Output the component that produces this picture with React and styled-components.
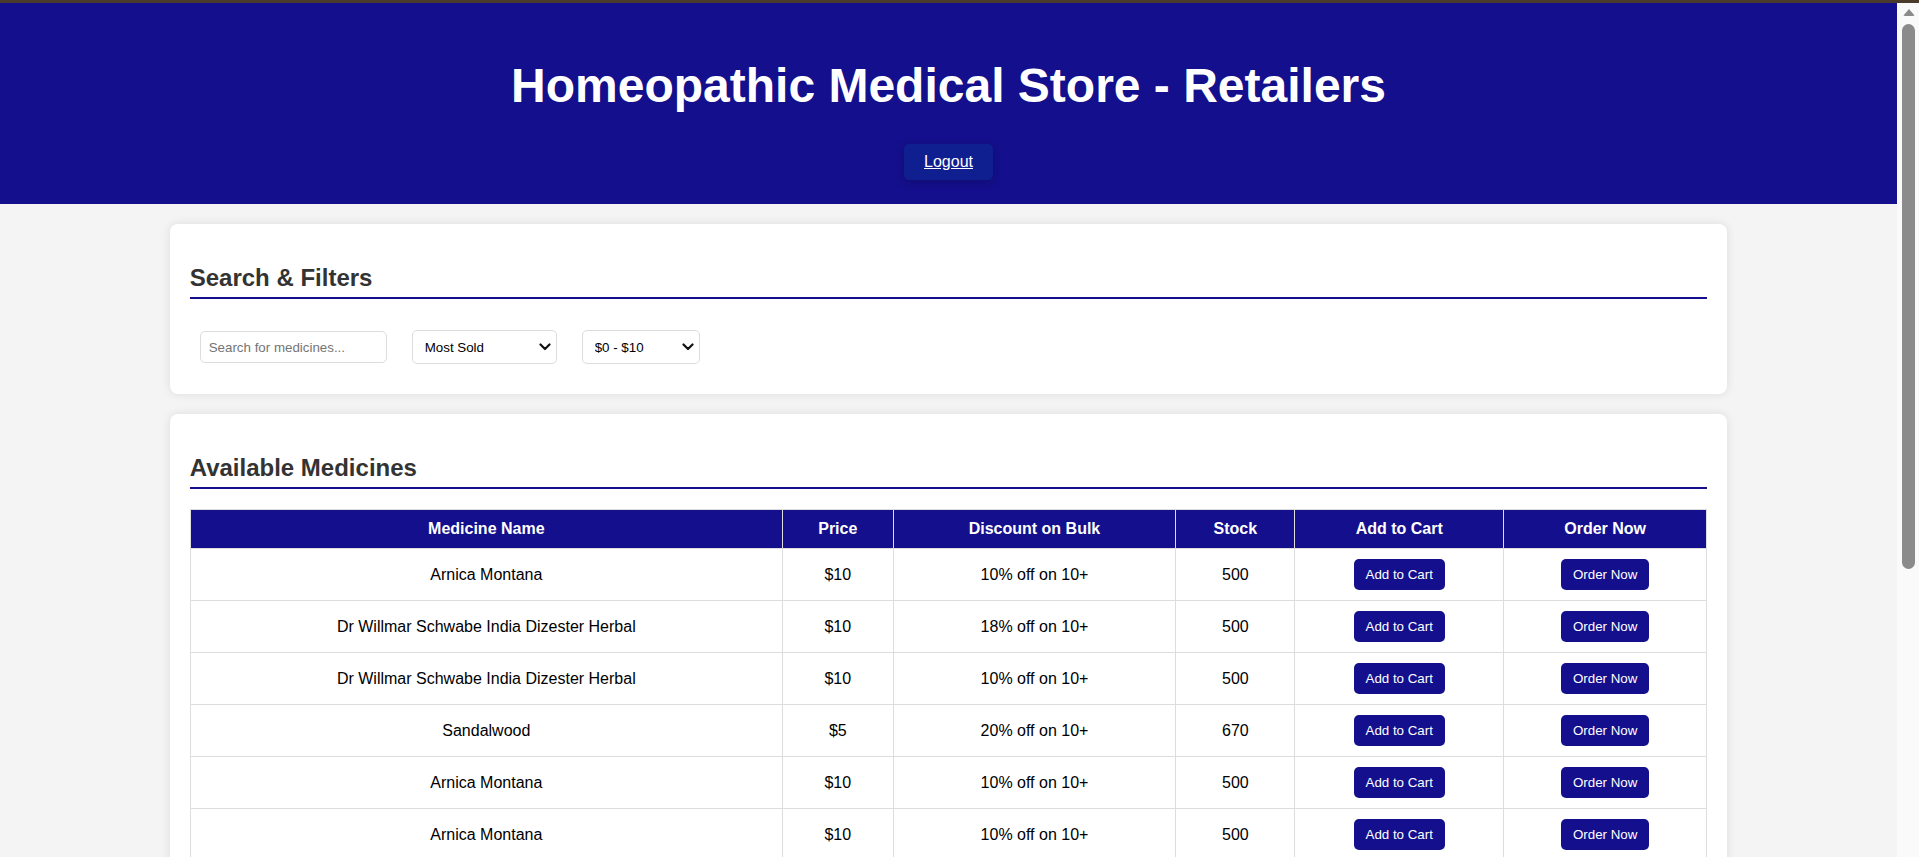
import React from 'react';
import styled, { createGlobalStyle } from 'styled-components';

const GlobalStyle = createGlobalStyle`
  html, body {
    margin: 0;
    padding: 0;
    height: 100%;
    overflow: hidden;
    background: #f4f4f4;
    font-family: "Liberation Sans", Arial, sans-serif;
  }
`;

const Shell = styled.div`
  display: flex;
  height: 100vh;
  box-sizing: border-box;
  border-top: 3px solid #4a3b2c;
  background: #f4f4f4;
`;

const Main = styled.main`
  flex: 1;
  min-width: 0;
  overflow-y: auto;
  scrollbar-width: none;
`;

const ScrollRail = styled.div`
  flex: 0 0 22px;
  display: flex;
  flex-direction: column;
  align-items: center;
  gap: 8px;
  padding: 6px 0 0 1px;
  box-sizing: border-box;
  background: #fafafa;
`;

const ScrollArrow = styled.div`
  width: 0;
  height: 0;
  border-left: 6px solid transparent;
  border-right: 6px solid transparent;
  border-bottom: 7px solid #8b8b8b;
  border-radius: 2px;
`;

const ScrollThumb = styled.div`
  width: 13px;
  height: 545px;
  border-radius: 7px;
  background: #8b8b8b;
`;

const Header = styled.header`
  display: flex;
  flex-direction: column;
  align-items: center;
  background: #140f8c;
  padding: 55px 20px 24px;
`;

const Title = styled.h1`
  margin: 0;
  color: #fff;
  font-size: 48px;
  font-weight: bold;
`;

const LogoutButton = styled.button`
  margin-top: 31px;
  padding: 9px 20px;
  background: #0f1f8f;
  color: #fff;
  border: none;
  border-radius: 5px;
  font-family: "Liberation Sans", Arial, sans-serif;
  font-size: 16px;
  text-decoration: underline;
  box-shadow: 0 2px 8px rgba(0, 0, 0, 0.2);
  cursor: pointer;
`;

const Card = styled.section`
  width: 80%;
  margin: 20px auto;
  padding: 20px;
  background: #fff;
  border-radius: 8px;
  box-shadow: 0 0 10px rgba(0, 0, 0, 0.1);
`;

const SectionTitle = styled.h2`
  margin: 20px 0;
  padding-bottom: 5px;
  color: #333;
  font-size: 24px;
  font-weight: bold;
  border-bottom: 2px solid #140f8c;
`;

const FilterRow = styled.div`
  display: flex;
  align-items: center;
  gap: 25px;
  padding: 11px 10px 10px;
`;

const SearchInput = styled.input`
  box-sizing: border-box;
  width: 187px;
  height: 32px;
  padding: 8px;
  border: 1px solid #ddd;
  border-radius: 5px;
  font-family: "Liberation Sans", Arial, sans-serif;
  font-size: 13.33px;

  &::placeholder {
    color: #757575;
  }
`;

const SelectWrap = styled.div`
  position: relative;
  display: inline-flex;
`;

const Select = styled.select`
  box-sizing: border-box;
  appearance: none;
  width: ${(p) => p.$width}px;
  height: 34px;
  padding: 8px 26px 8px 12px;
  border: 1px solid #ddd;
  border-radius: 5px;
  background: #fff;
  color: #000;
  font-family: "Liberation Sans", Arial, sans-serif;
  font-size: 13.33px;
`;

const Chevron = styled.svg`
  position: absolute;
  right: 6px;
  top: 13px;
  pointer-events: none;
`;

const Table = styled.table`
  width: 100%;
  border-collapse: collapse;
  table-layout: fixed;
`;

const Col = styled.col`
  width: ${(p) => p.$width}%;
`;

const Th = styled.th`
  padding: 10px;
  background: #140f8c;
  color: #fff;
  border: 1px solid #ddd;
  font-size: 16px;
  font-weight: bold;
  text-align: center;
`;

const Td = styled.td`
  padding: 10px;
  border: 1px solid #ddd;
  color: #000;
  font-size: 16px;
  text-align: center;
`;

const ActionButton = styled.button`
  padding: 8px 12px;
  background: #140f8c;
  color: #fff;
  border: none;
  border-radius: 5px;
  font-family: "Liberation Sans", Arial, sans-serif;
  font-size: 13.33px;
  cursor: pointer;
`;

const columns = [
  { label: 'Medicine Name', width: 39.05 },
  { label: 'Price', width: 7.3 },
  { label: 'Discount on Bulk', width: 18.64 },
  { label: 'Stock', width: 7.85 },
  { label: 'Add to Cart', width: 13.76 },
  { label: 'Order Now', width: 13.4 },
];

const medicines = [
  { name: 'Arnica Montana', price: '$10', discount: '10% off on 10+', stock: 500 },
  { name: 'Dr Willmar Schwabe India Dizester Herbal', price: '$10', discount: '18% off on 10+', stock: 500 },
  { name: 'Dr Willmar Schwabe India Dizester Herbal', price: '$10', discount: '10% off on 10+', stock: 500 },
  { name: 'Sandalwood', price: '$5', discount: '20% off on 10+', stock: 670 },
  { name: 'Arnica Montana', price: '$10', discount: '10% off on 10+', stock: 500 },
  { name: 'Arnica Montana', price: '$10', discount: '10% off on 10+', stock: 500 },
  { name: 'Arnica Montana', price: '$10', discount: '10% off on 10+', stock: 500 },
  { name: 'Sandalwood', price: '$5', discount: '20% off on 10+', stock: 670 },
  { name: 'Dr Willmar Schwabe India Dizester Herbal', price: '$10', discount: '18% off on 10+', stock: 500 },
  { name: 'Arnica Montana', price: '$10', discount: '10% off on 10+', stock: 500 },
  { name: 'Sandalwood', price: '$5', discount: '20% off on 10+', stock: 670 },
  { name: 'Arnica Montana', price: '$10', discount: '10% off on 10+', stock: 500 },
  { name: 'Arnica Montana', price: '$10', discount: '10% off on 10+', stock: 500 },
];

const ChevronIcon = () => (
  <Chevron width="12" height="8" viewBox="0 0 12 8">
    <polyline points="1.5,1.5 6,6 10.5,1.5" fill="none" stroke="#111" strokeWidth="2.2" strokeLinecap="round" strokeLinejoin="round" />
  </Chevron>
);

const App = () => {
  return (
    <Shell>
      <GlobalStyle />
      <Main>
        <Header>
          <Title>Homeopathic Medical Store - Retailers</Title>
          <LogoutButton>Logout</LogoutButton>
        </Header>

        <Card>
          <SectionTitle>Search &amp; Filters</SectionTitle>
          <FilterRow>
            <SearchInput type="text" placeholder="Search for medicines..." />
            <SelectWrap>
              <Select $width={145} defaultValue="most">
                <option value="most">Most Sold</option>
                <option value="least">Least Sold</option>
              </Select>
              <ChevronIcon />
            </SelectWrap>
            <SelectWrap>
              <Select $width={118} defaultValue="0-10">
                <option value="0-10">$0 - $10</option>
                <option value="10-50">$10 - $50</option>
              </Select>
              <ChevronIcon />
            </SelectWrap>
          </FilterRow>
        </Card>

        <Card>
          <SectionTitle>Available Medicines</SectionTitle>
          <Table>
            <colgroup>
              {columns.map((col) => (
                <Col key={col.label} $width={col.width} />
              ))}
            </colgroup>
            <thead>
              <tr>
                {columns.map((col) => (
                  <Th key={col.label}>{col.label}</Th>
                ))}
              </tr>
            </thead>
            <tbody>
              {medicines.map((med, index) => (
                <tr key={index}>
                  <Td>{med.name}</Td>
                  <Td>{med.price}</Td>
                  <Td>{med.discount}</Td>
                  <Td>{med.stock}</Td>
                  <Td><ActionButton>Add to Cart</ActionButton></Td>
                  <Td><ActionButton>Order Now</ActionButton></Td>
                </tr>
              ))}
            </tbody>
          </Table>
        </Card>
      </Main>
      <ScrollRail>
        <ScrollArrow />
        <ScrollThumb />
      </ScrollRail>
    </Shell>
  );
};

export default App;
